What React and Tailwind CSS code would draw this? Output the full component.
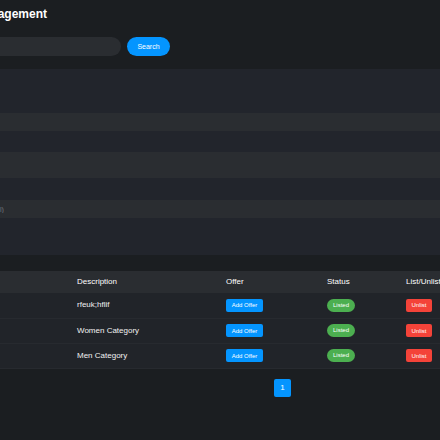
const rows = ["rfeuk;hflif", "Women Category", "Men Category"];

const field =
  "block w-full resize-none bg-[#2a2d31] px-0 text-[7px] leading-[8px] text-white outline-none placeholder:text-[#73777c]";

export default function App() {
  return (
    <main className="min-h-screen overflow-hidden bg-[#1b1e21] font-['Liberation_Sans',Arial,sans-serif] text-[#f1f1f2]">
      <h1 className="flex w-12 justify-end pt-1.5 pr-px text-[12px] leading-4 font-bold text-white">
        agement
      </h1>

      <form className="mt-[15px] flex gap-1.5" onSubmit={(e) => e.preventDefault()}>
        <input
          type="search"
          aria-label="Search categories"
          className="h-[19px] w-[121px] rounded-r-full bg-[#2a2d31] px-2 text-[7px] outline-none"
        />
        <button
          type="submit"
          className="h-[19px] w-[43px] rounded-full bg-[#0495ff] text-[7px] leading-[8px] text-white"
        >
          Search
        </button>
      </form>

      <form
        className="mt-[13px] bg-[#22252c] pt-11 pb-[37px]"
        onSubmit={(e) => e.preventDefault()}
      >
        <input type="text" aria-label="Category name" className={`${field} h-[18px]`} />
        <textarea aria-label="Description" className={`${field} mt-[21px] h-[26px]`} />
        <input
          type="text"
          aria-label="Offer"
          placeholder="l)"
          className={`${field} mt-[22px] h-[18px]`}
        />
      </form>

      <div className="mt-4 overflow-hidden">
        <table className="w-full min-w-[448px] table-fixed border-collapse text-left text-[8px] leading-[10px] whitespace-nowrap">
          <colgroup>
            <col className="w-[77px]" />
            <col className="w-[149px]" />
            <col className="w-[101px]" />
            <col className="w-[79px]" />
            <col />
          </colgroup>
          <thead>
            <tr className="h-[22px] bg-[#2a2d31] text-white">
              <td />
              <th className="p-0 font-normal">Description</th>
              <th className="p-0 font-normal">Offer</th>
              <th className="p-0 font-normal">Status</th>
              <th className="p-0 font-normal">List/Unlist</th>
            </tr>
          </thead>
          <tbody>
            {rows.map((description) => (
              <tr key={description} className="h-[25px] border-b border-[#272a2f] bg-[#212429]">
                <td />
                <td className="p-0">{description}</td>
                <td className="p-0">
                  <button
                    type="button"
                    className="block h-[13px] w-[37px] rounded-[2px] bg-[#0495ff] text-[6px] leading-[8px] text-white"
                  >
                    Add Offer
                  </button>
                </td>
                <td className="p-0">
                  <span className="block h-[13px] w-7 rounded-full bg-[#4caf50] text-center text-[6px] leading-[13px] text-white">
                    Listed
                  </span>
                </td>
                <td className="p-0">
                  <button
                    type="button"
                    className="block h-[13px] w-[26px] rounded-[2px] bg-[#f44339] text-[6px] leading-[8px] text-white"
                  >
                    Unlist
                  </button>
                </td>
              </tr>
            ))}
          </tbody>
        </table>
      </div>

      <nav aria-label="Pagination" className="mt-2.5 flex justify-center pl-[125px]">
        <button
          type="button"
          aria-current="page"
          className="h-[18px] w-[17px] rounded-[2px] bg-[#0495ff] text-[8px] leading-[10px] text-white"
        >
          1
        </button>
      </nav>
    </main>
  );
}
